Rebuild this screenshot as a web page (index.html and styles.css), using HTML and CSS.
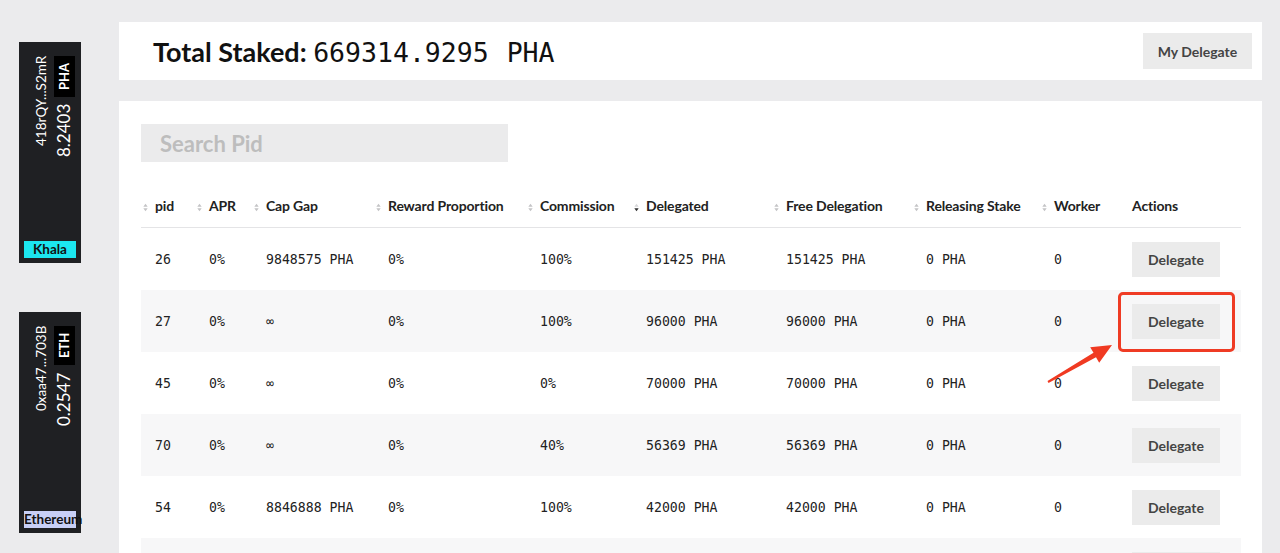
FILE: index.html
```html
<!DOCTYPE html>
<html lang="en">
<head>
<meta charset="utf-8">
<title>Stake Pools</title>
<link rel="stylesheet" href="styles.css">
</head>
<body>
<div class="page">
  <aside class="sidebar">
    <div class="wallet">
      <div class="wallet-info">
        <div class="addr">418rQY...S2mR</div>
        <div class="bal"><span class="amt">8.2403</span><span class="tag">PHA</span></div>
      </div>
      <div class="net net-khala">Khala</div>
    </div>
    <div class="wallet">
      <div class="wallet-info">
        <div class="addr">0xaa47...703B</div>
        <div class="bal"><span class="amt">0.2547</span><span class="tag">ETH</span></div>
      </div>
      <div class="net net-eth">Ethereum</div>
    </div>
  </aside>

  <main class="main">
    <header class="summary">
      <h1 class="total">Total Staked: <span class="mono">669314.9295</span><span class="mono unit">PHA</span></h1>
      <button class="btn btn-my">My Delegate</button>
    </header>

    <section class="card">
      <input class="search" type="text" placeholder="Search Pid">

      <table class="pools">
        <colgroup>
          <col class="w-pid"><col class="w-apr"><col class="w-cap"><col class="w-reward"><col class="w-comm">
          <col class="w-del"><col class="w-free"><col class="w-rel"><col class="w-worker"><col class="w-act">
        </colgroup>
        <thead>
          <tr>
            <th><svg class="sort" viewBox="0 0 5 9"><path class="up" d="M0.3 3.8 L2.5 0.8 L4.7 3.8 Z"/><path class="dn" d="M0.3 5.2 L2.5 8.2 L4.7 5.2 Z"/></svg>pid</th>
            <th><svg class="sort" viewBox="0 0 5 9"><path class="up" d="M0.3 3.8 L2.5 0.8 L4.7 3.8 Z"/><path class="dn" d="M0.3 5.2 L2.5 8.2 L4.7 5.2 Z"/></svg>APR</th>
            <th><svg class="sort" viewBox="0 0 5 9"><path class="up" d="M0.3 3.8 L2.5 0.8 L4.7 3.8 Z"/><path class="dn" d="M0.3 5.2 L2.5 8.2 L4.7 5.2 Z"/></svg>Cap Gap</th>
            <th><svg class="sort" viewBox="0 0 5 9"><path class="up" d="M0.3 3.8 L2.5 0.8 L4.7 3.8 Z"/><path class="dn" d="M0.3 5.2 L2.5 8.2 L4.7 5.2 Z"/></svg>Reward Proportion</th>
            <th><svg class="sort" viewBox="0 0 5 9"><path class="up" d="M0.3 3.8 L2.5 0.8 L4.7 3.8 Z"/><path class="dn" d="M0.3 5.2 L2.5 8.2 L4.7 5.2 Z"/></svg>Commission</th>
            <th><svg class="sort sort-desc" viewBox="0 0 5 9"><path class="up" d="M0.3 3.8 L2.5 0.8 L4.7 3.8 Z"/><path class="dn" d="M0.3 5.2 L2.5 8.2 L4.7 5.2 Z"/></svg>Delegated</th>
            <th><svg class="sort" viewBox="0 0 5 9"><path class="up" d="M0.3 3.8 L2.5 0.8 L4.7 3.8 Z"/><path class="dn" d="M0.3 5.2 L2.5 8.2 L4.7 5.2 Z"/></svg>Free Delegation</th>
            <th><svg class="sort" viewBox="0 0 5 9"><path class="up" d="M0.3 3.8 L2.5 0.8 L4.7 3.8 Z"/><path class="dn" d="M0.3 5.2 L2.5 8.2 L4.7 5.2 Z"/></svg>Releasing Stake</th>
            <th><svg class="sort" viewBox="0 0 5 9"><path class="up" d="M0.3 3.8 L2.5 0.8 L4.7 3.8 Z"/><path class="dn" d="M0.3 5.2 L2.5 8.2 L4.7 5.2 Z"/></svg>Worker</th>
            <th class="th-plain">Actions</th>
          </tr>
        </thead>
        <tbody>
          <tr><td>26</td><td>0%</td><td>9848575 PHA</td><td>0%</td><td>100%</td><td>151425 PHA</td><td>151425 PHA</td><td>0 PHA</td><td>0</td><td class="act"><button class="btn btn-del">Delegate</button></td></tr>
          <tr><td>27</td><td>0%</td><td>∞</td><td>0%</td><td>100%</td><td>96000 PHA</td><td>96000 PHA</td><td>0 PHA</td><td>0</td><td class="act"><button class="btn btn-del">Delegate</button></td></tr>
          <tr><td>45</td><td>0%</td><td>∞</td><td>0%</td><td>0%</td><td>70000 PHA</td><td>70000 PHA</td><td>0 PHA</td><td>0</td><td class="act"><button class="btn btn-del">Delegate</button></td></tr>
          <tr><td>70</td><td>0%</td><td>∞</td><td>0%</td><td>40%</td><td>56369 PHA</td><td>56369 PHA</td><td>0 PHA</td><td>0</td><td class="act"><button class="btn btn-del">Delegate</button></td></tr>
          <tr><td>54</td><td>0%</td><td>8846888 PHA</td><td>0%</td><td>100%</td><td>42000 PHA</td><td>42000 PHA</td><td>0 PHA</td><td>0</td><td class="act"><button class="btn btn-del">Delegate</button></td></tr>
          <tr class="row-partial"><td></td><td></td><td></td><td></td><td></td><td></td><td></td><td></td><td></td><td class="act"><button class="btn btn-del" aria-label="Delegate"></button></td></tr>
        </tbody>
      </table>

      <div class="highlight"></div>
      <svg class="arrow" viewBox="1040 340 80 50" width="80" height="50">
        <polygon points="1047.5,381.1 1093.5,352.8 1090.2,347.2 1112,345 1099.2,362.8 1096,357.2 1048.5,382.9" fill="#f03a22"/>
      </svg>
    </section>
  </main>
</div>
</body>
</html>
```

FILE: styles.css
```css
html, body {
  margin: 0;
  padding: 0;
  overflow: hidden;
}

body {
  background: #ebebed;
  font-family: Lato, "Open Sans", Arial, sans-serif;
  color: #111;
}

.page {
  display: flex;
  min-height: 553px;
}

/* ---------- sidebar wallets ---------- */
.sidebar {
  width: 119px;
  flex: none;
  box-sizing: border-box;
  padding: 42px 0 0 19px;
  display: flex;
  flex-direction: column;
  gap: 49px;
}

.wallet {
  width: 62px;
  height: 221px;
  box-sizing: border-box;
  background: #1f2023;
  padding: 14px 5px 5px;
  display: flex;
  flex-direction: column;
  justify-content: space-between;
}

.wallet-info {
  writing-mode: vertical-rl;
  transform: rotate(180deg);
  height: 108px;
  margin-left: 9px;
  align-self: flex-start;
  text-align: end;
  color: #fff;
  white-space: nowrap;
}

.addr {
  font-size: 13.5px;
  line-height: 16px;
}

.bal {
  line-height: 21px;
  margin-block-start: 4px;
}

.amt {
  font-size: 17px;
}

.tag {
  display: inline-block;
  background: #000;
  font-size: 13px;
  font-weight: 700;
  line-height: 21px;
  padding-inline: 7px;
  margin-inline-start: 7px;
}

.net {
  height: 17px;
  line-height: 17px;
  font-size: 13.5px;
  font-weight: 700;
  color: #111;
  text-align: center;
  white-space: nowrap;
}

.net-khala {
  background: #1ce6ef;
}

.net-eth {
  background: #c8cff6;
}

/* ---------- main ---------- */
.main {
  flex: 1;
  padding: 22px 18px 0 0;
  display: flex;
  flex-direction: column;
  gap: 21px;
  min-width: 0;
}

.summary {
  background: #fff;
  height: 58px;
  box-sizing: border-box;
  padding: 0 10px 0 34px;
  display: flex;
  align-items: center;
  justify-content: space-between;
}

.total {
  margin: 0;
  font-size: 27px;
  font-weight: 700;
  color: #111;
}

.mono {
  font-family: "DejaVu Sans Mono", "Liberation Mono", monospace;
  font-weight: 400;
  font-size: 26.5px;
}

.unit {
  margin-left: 18px;
}

.btn {
  border: 0;
  background: #ebebeb;
  color: #444;
  font-family: Lato, Arial, sans-serif;
  font-weight: 700;
  font-size: 14px;
  padding: 0;
  cursor: pointer;
}

.btn-my {
  width: 109px;
  height: 36px;
}

.card {
  position: relative;
  flex: 1;
  background: #fff;
  padding: 23px 21px 0 22px;
}

.search {
  display: block;
  width: 367px;
  height: 38px;
  box-sizing: border-box;
  border: 0;
  outline: none;
  background: #ebebec;
  padding: 0 0 0 19px;
  font-family: Lato, Arial, sans-serif;
  font-weight: 700;
  font-size: 22px;
  color: #333;
}

.search::placeholder {
  color: #bdbdbd;
}

/* ---------- table ---------- */
.pools {
  margin-top: 21px;
  width: 1100px;
  border-collapse: collapse;
  table-layout: fixed;
}

.w-pid { width: 54px; }
.w-apr { width: 57px; }
.w-cap { width: 122px; }
.w-reward { width: 152px; }
.w-comm { width: 106px; }
.w-del { width: 140px; }
.w-free { width: 140px; }
.w-rel { width: 128px; }
.w-worker { width: 78px; }
.w-act { width: 123px; }

.pools th {
  height: 44px;
  padding: 0 0 0 2px;
  text-align: left;
  font-size: 14px;
  font-weight: 700;
  letter-spacing: -0.15px;
  color: #222;
  white-space: nowrap;
  border-bottom: 1px solid #e4e4e6;
  vertical-align: middle;
}

.pools th.th-plain {
  padding-left: 14px;
}

.sort {
  display: inline-block;
  width: 5px;
  height: 9px;
  margin-right: 7px;
  vertical-align: -1px;
}

.sort path {
  fill: #c4c4c6;
}

.sort-desc .up {
  fill: #d6d6d8;
}

.sort-desc .dn {
  fill: #333;
}

.pools td {
  height: 62px;
  padding: 0 0 0 14px;
  font-family: "DejaVu Sans Mono", "Liberation Mono", monospace;
  font-size: 13.2px;
  color: #222;
  white-space: nowrap;
  vertical-align: middle;
}

.pools tbody tr:nth-child(even) td {
  background: #f7f7f8;
}

.btn-del {
  width: 88px;
  height: 35px;
  display: block;
}

/* ---------- annotation overlay ---------- */
.highlight {
  position: absolute;
  left: 999px;
  top: 191px;
  width: 117px;
  height: 60px;
  box-sizing: border-box;
  border: 3px solid #ef3b24;
  border-radius: 5px;
  pointer-events: none;
}

.arrow {
  position: absolute;
  left: 921px;
  top: 239px;
  pointer-events: none;
}
```
